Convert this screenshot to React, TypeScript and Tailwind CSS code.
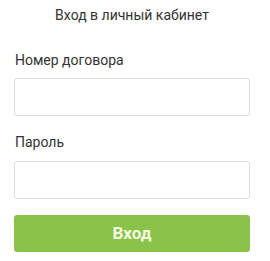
export default function App() {
	return (
		<div className="w-[270px] h-[261px] bg-white font-['Roboto',sans-serif] text-[#333]">
			<div className="flex flex-col pl-[14px] pr-[20px]">
				<h1 className="pt-[5px] text-center text-[14px] leading-[20px]">Вход в личный кабинет</h1>
				<label className="mt-[25px] pl-[1px] text-[14px] leading-[20px]">Номер договора</label>
				<input type="text" className="mt-[8px] h-[38px] w-full rounded-[3px] border border-[#dcdcdc] bg-white px-3 outline-none" />
				<label className="mt-[16px] pl-[1px] text-[14px] leading-[20px]">Пароль</label>
				<input type="password" className="mt-[9px] h-[38px] w-full rounded-[3px] border border-[#dcdcdc] bg-white px-3 outline-none" />
				<button className="mt-[16px] h-[37px] w-full rounded-[3px] bg-[#8bc34a] text-[17px] font-bold text-[#f5f9e4]">Вход</button>
			</div>
		</div>
	);
}
